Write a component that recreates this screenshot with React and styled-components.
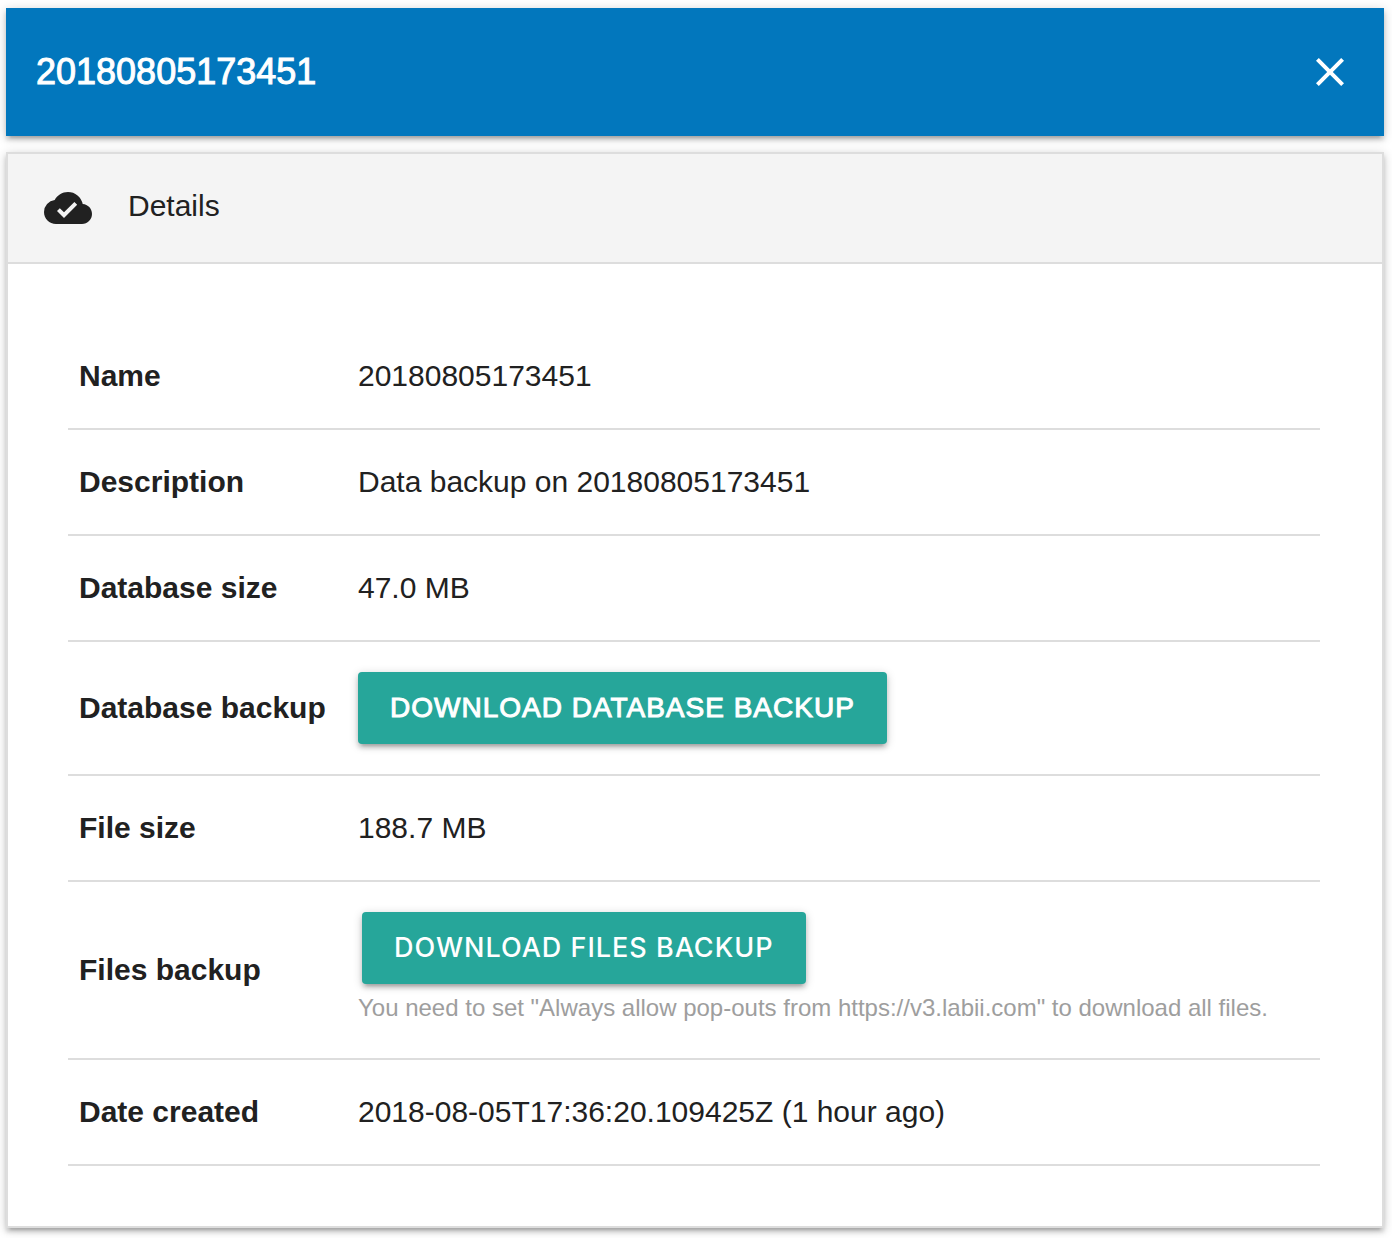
import React from "react";
import styled, { createGlobalStyle, css } from "styled-components";

const Global = createGlobalStyle`
  * { box-sizing: border-box; }
  body {
    margin: 0;
    background: #fff;
    color: #212121;
    font: 30px/44px "Liberation Sans", Arial, sans-serif;
  }
`;

const raised = css`
  box-shadow:
    0 4px 4px 0 rgba(0, 0, 0, 0.14),
    0 6px 2px -4px rgba(0, 0, 0, 0.12),
    0 2px 10px 0 rgba(0, 0, 0, 0.2);
`;

const Page = styled.main`
  display: flex;
  flex-direction: column;
  gap: 16px;
  padding: 8px 8px 10px 6px;
`;

const TitleBar = styled.header`
  display: flex;
  align-items: center;
  justify-content: space-between;
  height: 128px;
  padding: 0 30px;
  background: #0277bd;
  color: #fff;
  ${raised}
`;

const Title = styled.h1`
  margin: 0;
  font-size: 36px;
  font-weight: 400;
  -webkit-text-stroke: 1px currentColor;
`;

const CloseButton = styled.button`
  display: flex;
  padding: 0;
  border: 0;
  background: none;
  color: inherit;
  cursor: pointer;
`;

const Panel = styled.section`
  border: 2px solid #ddd;
  background: #fff;
  ${raised}
`;

const PanelHeader = styled.header`
  display: flex;
  align-items: flex-start;
  gap: 36px;
  padding: 30px 36px;
  border-bottom: 2px solid #ddd;
  background: #f4f4f4;
`;

const PanelTitle = styled.h2`
  margin: 0;
  font-size: 30px;
  font-weight: 400;
`;

const PanelBody = styled.div`
  padding: 60px 62px 60px 60px;
`;

const Table = styled.table`
  width: 100%;
  border-collapse: separate;
  border-spacing: 0;
`;

const Label = styled.th`
  width: 280px;
  padding: 30px 11px;
  border-bottom: 2px solid #ddd;
  font-weight: 700;
  text-align: left;
  white-space: nowrap;
`;

const Value = styled.td`
  padding: 30px 10px;
  border-bottom: 2px solid #ddd;
`;

const pageFace = css`
  margin: 0;
  font: 400 28px/72px "Liberation Sans", Arial, sans-serif;
  -webkit-text-stroke: 1px currentColor;
`;

const systemFace = css`
  margin: 0 4px;
  font: 500 27px/72px Inter, sans-serif;
`;

const DownloadButton = styled.button`
  display: block;
  height: 72px;
  padding: 0 32px;
  border: 0;
  border-radius: 4px;
  background: #26a69a;
  color: #fff;
  letter-spacing: 1px;
  text-transform: uppercase;
  cursor: pointer;
  ${(p) => (p.$system ? systemFace : pageFace)}
  ${raised}
`;

const Hint = styled.p`
  margin: 4px 0 0;
  color: #9e9e9e;
  font-size: 24px;
  line-height: 40px;
`;

const CloseIcon = () => (
  <svg width="48" height="48" viewBox="0 0 24 24" fill="currentColor" aria-hidden="true">
    <path d="M19 6.41 17.59 5 12 10.59 6.41 5 5 6.41 10.59 12 5 17.59 6.41 19 12 13.41 17.59 19 19 17.59 13.41 12z" />
  </svg>
);

const CloudDoneIcon = () => (
  <svg width="48" height="48" viewBox="0 0 24 24" fill="currentColor" aria-hidden="true">
    <path d="M19.35 10.04A7.49 7.49 0 0 0 12 4C9.11 4 6.6 5.64 5.35 8.04A5.994 5.994 0 0 0 0 14c0 3.31 2.69 6 6 6h13c2.76 0 5-2.24 5-5 0-2.64-2.05-4.78-4.65-4.96zM10 17l-3.5-3.5 1.41-1.41L10 14.17 15.18 9l1.41 1.41L10 17z" />
  </svg>
);

const rows = [
  { label: "Name", value: "20180805173451" },
  { label: "Description", value: "Data backup on 20180805173451" },
  { label: "Database size", value: "47.0 MB" },
  { label: "Database backup", action: "Download database backup" },
  { label: "File size", value: "188.7 MB" },
  {
    label: "Files backup",
    action: "Download files backup",
    system: true,
    hint: 'You need to set "Always allow pop-outs from https://v3.labii.com" to download all files.',
  },
  { label: "Date created", value: "2018-08-05T17:36:20.109425Z (1 hour ago)" },
];

export default function App() {
  return (
    <>
      <Global />
      <Page>
        <TitleBar>
          <Title>20180805173451</Title>
          <CloseButton type="button" aria-label="Close">
            <CloseIcon />
          </CloseButton>
        </TitleBar>
        <Panel>
          <PanelHeader>
            <CloudDoneIcon />
            <PanelTitle>Details</PanelTitle>
          </PanelHeader>
          <PanelBody>
            <Table>
              <tbody>
                {rows.map((row) => (
                  <tr key={row.label}>
                    <Label scope="row">{row.label}</Label>
                    <Value>
                      {row.value}
                      {row.action && (
                        <DownloadButton type="button" $system={row.system}>
                          {row.action}
                        </DownloadButton>
                      )}
                      {row.hint && <Hint>{row.hint}</Hint>}
                    </Value>
                  </tr>
                ))}
              </tbody>
            </Table>
          </PanelBody>
        </Panel>
      </Page>
    </>
  );
}
